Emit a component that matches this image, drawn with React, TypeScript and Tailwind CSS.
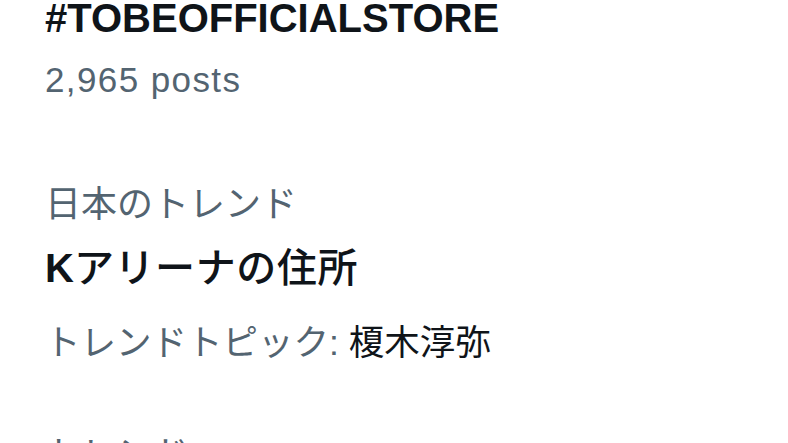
export default function App() {
  return (
    <div
      className="w-[788px] h-[443px] overflow-hidden bg-white pl-[45px] text-[#0f1419]"
      style={{ fontFamily: '"Liberation Sans", "Noto Sans CJK JP", sans-serif' }}
    >
      <div>
        <p className="-mt-[6px] text-[40px] leading-[48px] font-bold">#TOBEOFFICIALSTORE</p>
        <p className="mt-[16px] text-[35px] leading-[44px] text-[#536471] tracking-[1.4px]">2,965 posts</p>
      </div>

      <div className="mt-[81px]">
        <p className="text-[36px] leading-[44px] text-[#536471]">日本のトレンド</p>
        <p className="mt-[17px] text-[40px] leading-[48px]">
          <span className="font-bold">K</span>
          <span className="font-medium tracking-[0.6px]">アリーナの住所</span>
        </p>
        <p className="mt-[29px] text-[35.5px] leading-[44px] text-[#536471]">
          トレンドトピック: <span className="text-[#0f1419]">榎木淳弥</span>
        </p>
      </div>

      <div className="mt-[68px]">
        <p className="text-[36px] leading-[44px] text-[#536471]">トレンド</p>
      </div>
    </div>
  );
}
